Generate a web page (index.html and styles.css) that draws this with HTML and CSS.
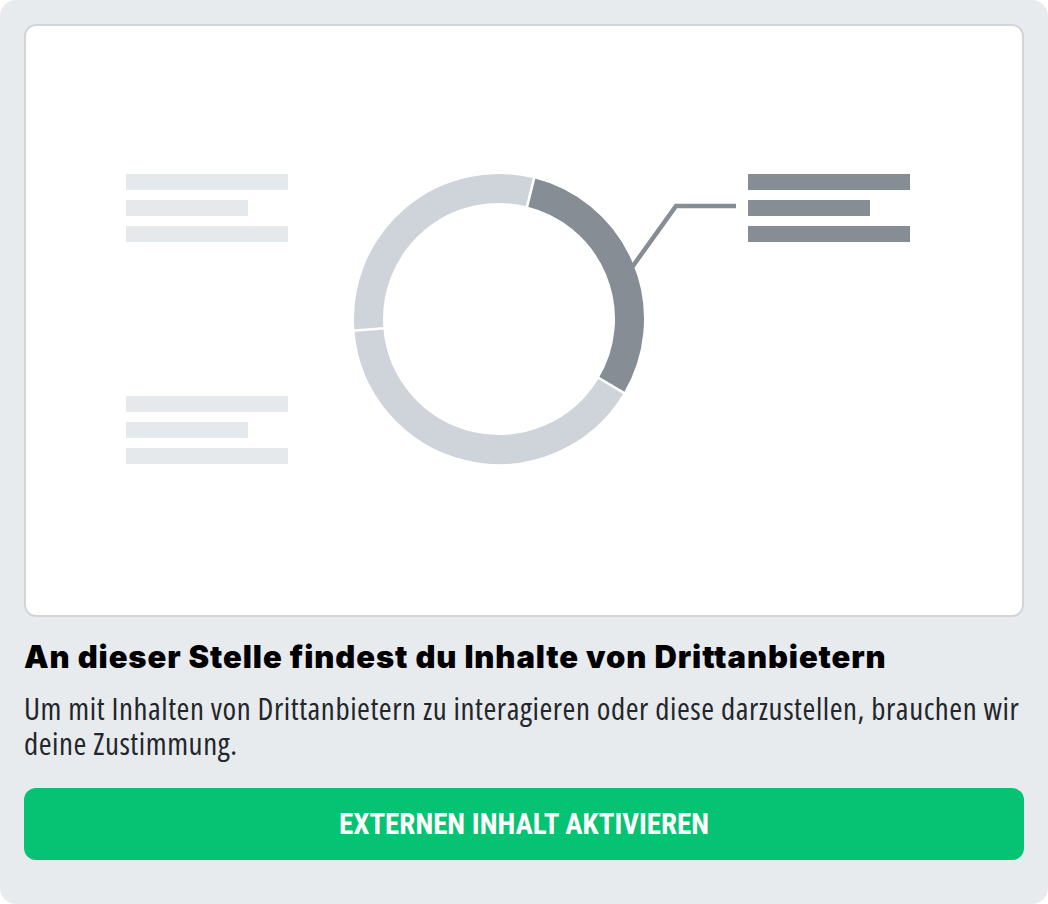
FILE: index.html
```html
<!DOCTYPE html>
<html lang="de">
<head>
<meta charset="utf-8">
<title>Externer Inhalt</title>
<link rel="stylesheet" href="styles.css">
</head>
<body>
<section class="consent">
  <div class="preview">
    <svg class="chart" viewBox="26 26 996 589" width="996" height="589" aria-hidden="true">
      <g class="bars-light">
        <rect x="126" y="174" width="162" height="16"/>
        <rect x="126" y="200" width="122" height="16"/>
        <rect x="126" y="226" width="162" height="16"/>
        <rect x="126" y="396" width="162" height="16"/>
        <rect x="126" y="422" width="122" height="16"/>
        <rect x="126" y="448" width="162" height="16"/>
      </g>
      <g class="bars-dark">
        <rect x="748" y="174" width="162" height="16"/>
        <rect x="748" y="200" width="122" height="16"/>
        <rect x="748" y="226" width="162" height="16"/>
      </g>
      <polyline class="leader" points="736,206 676,206 620,284"/>
      <path class="ring-light" d="M 611.32 385.42 A 130.5 130.5 0 0 1 368.92 329.47"/>
      <path class="ring-light" d="M 368.92 329.47 A 130.5 130.5 0 0 1 530.57 192.38"/>
      <path class="ring-dark" d="M 530.57 192.38 A 130.5 130.5 0 0 1 611.32 385.42"/>
      <g class="gaps">
        <line x1="526.09" y1="210.33" x2="535.29" y2="173.46"/>
        <line x1="595.40" y1="376.00" x2="628.10" y2="395.35"/>
        <line x1="387.36" y1="327.98" x2="349.48" y2="331.03"/>
      </g>
    </svg>
  </div>
  <h2 class="title">An dieser Stelle findest du Inhalte von Drittanbietern</h2>
  <p class="text">Um mit Inhalten von Drittanbietern zu interagieren oder diese darzustellen, brauchen wir deine Zustimmung.</p>
  <button class="activate" type="button">EXTERNEN INHALT AKTIVIEREN</button>
</section>
</body>
</html>
```
FILE: styles.css
```css
html, body {
  margin: 0;
  padding: 0;
  background: #ffffff;
}

.consent {
  box-sizing: border-box;
  width: 1048px;
  height: 904px;
  padding: 24px 24px 44px;
  background: #e8ebee;
  border-radius: 16px;
  display: flex;
  flex-direction: column;
}

.preview {
  box-sizing: border-box;
  height: 593px;
  flex: none;
  background: #ffffff;
  border: 2px solid #d1d5da;
  border-radius: 12px;
  overflow: hidden;
}

.chart {
  display: block;
}

.bars-light rect { fill: #e6e9ec; }
.bars-dark rect { fill: #878d95; }

.leader {
  fill: none;
  stroke: #878d95;
  stroke-width: 4.5;
  stroke-linejoin: miter;
}

.ring-light, .ring-dark {
  fill: none;
  stroke-width: 29;
}
.ring-light { stroke: #cfd4da; }
.ring-dark { stroke: #878d95; }

.gaps line {
  stroke: #ffffff;
  stroke-width: 2.6;
}

.title {
  margin: 21px 0 0;
  font-family: Inter, "Noto Sans", sans-serif;
  font-weight: 900;
  font-size: 31px;
  line-height: 38px;
  letter-spacing: 0.9px;
  color: #000000;
}

.text {
  margin: 15px 0 0;
  font-family: "Open Sans", "Noto Sans", sans-serif;
  font-stretch: condensed;
  font-weight: 400;
  font-size: 31px;
  line-height: 35px;
  letter-spacing: 0.55px;
  color: #23272b;
}

.activate {
  margin-top: 27px;
  height: 72px;
  flex: none;
  border: 0;
  border-radius: 12px;
  background: #06c373;
  color: #ffffff;
  font-family: "Roboto Condensed", Roboto, sans-serif;
  font-weight: 700;
  font-size: 29px;
  padding: 0;
  cursor: pointer;
}
```
